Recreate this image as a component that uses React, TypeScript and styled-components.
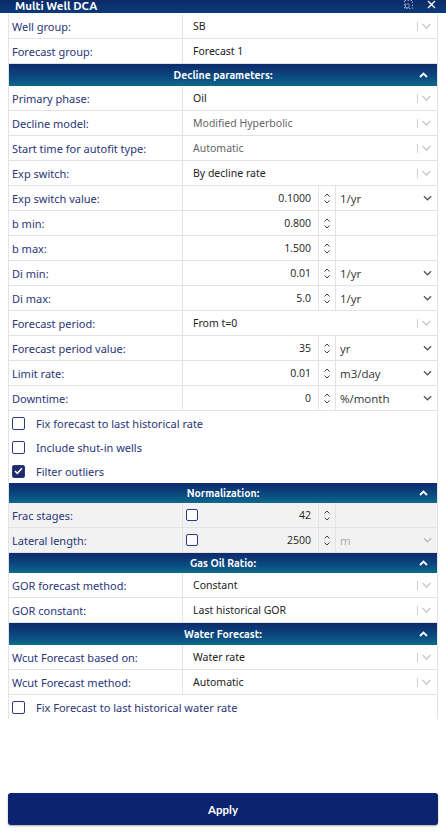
import React from 'react';
import styled, { createGlobalStyle, css } from 'styled-components';

const GlobalStyle = createGlobalStyle`
  html, body {
    margin: 0;
    padding: 0;
    background: #ffffff;
  }
  body {
    font-family: "Noto Sans", "Open Sans", sans-serif;
    width: 446px;
    height: 832px;
    overflow: hidden;
  }
`;

const LABEL = '#2a3577';
const BORDER = '#e3e3e3';

const Page = styled.div`
  width: 446px;
  height: 832px;
  display: flex;
  flex-direction: column;
`;

const TitleBar = styled.div`
  height: 13px;
  flex: 0 0 13px;
  background: linear-gradient(#0b2a6a, #0b3b78);
  display: flex;
  align-items: center;
  padding: 0 10px 0 15px;
  color: #fff;
`;

const Title = styled.div`
  font-family: "Ubuntu", "Noto Sans", sans-serif;
  font-weight: 700;
  font-size: 11.5px;
  line-height: 13px;
  margin-top: -3px;
  flex: 1;
`;

const TitleIcons = styled.div`
  display: flex;
  gap: 14px;
  align-items: center;
  margin-top: -4px;
`;

const Panel = styled.div`
  margin: 1px 8px 0 8px;
  border-left: 1px solid ${BORDER};
  border-right: 1px solid ${BORDER};
  display: flex;
  flex-direction: column;
`;

const Row = styled.div<{ $shaded?: boolean }>`
  height: 25px;
  display: grid;
  grid-template-columns: 174px 1fr;
  border-bottom: 1px solid ${BORDER};
  box-sizing: border-box;
  background: ${(p) => (p.$shaded ? '#f2f2f2' : '#fff')};
`;

const Label = styled.div`
  display: flex;
  align-items: center;
  padding-left: 3px;
  font-size: 11px;
  color: ${LABEL};
  border-right: 1px solid ${BORDER};
  white-space: nowrap;
`;

const SelectCell = styled.div<{ $muted?: boolean }>`
  display: flex;
  align-items: center;
  padding-left: 10px;
  font-size: 10.5px;
  color: ${(p) => (p.$muted ? '#666' : '#222')};
`;

const SelectText = styled.div`
  flex: 1;
`;

const DisabledArrow = styled.div`
  display: flex;
  align-items: center;
  gap: 3px;
  padding-right: 5px;
  color: #c9c9c9;
`;

const Bar = styled.div`
  width: 1px;
  height: 9px;
  background: #d0d0d0;
`;

const NumberCells = styled.div`
  display: grid;
  grid-template-columns: 136px 17px 1fr;
`;

const NumberInput = styled.div<{ $withCheck?: boolean }>`
  display: flex;
  align-items: center;
  justify-content: ${(p) => (p.$withCheck ? 'space-between' : 'flex-end')};
  padding: 0 7px 0 3px;
  font-family: "Open Sans", "Noto Sans", sans-serif;
  font-size: 10.5px;
  color: #222;
  border-right: 1px solid ${BORDER};
`;

const Spinner = styled.div`
  display: flex;
  flex-direction: column;
  align-items: center;
  justify-content: center;
  gap: 3px;
  border-right: 1px solid ${BORDER};
`;

const UnitCell = styled.div<{ $muted?: boolean }>`
  display: flex;
  align-items: center;
  padding: 0 5px 0 4px;
  font-family: "Open Sans", "Noto Sans", sans-serif;
  font-size: 11.5px;
  color: ${(p) => (p.$muted ? '#aaa' : '#333')};
`;

const UnitText = styled.div`
  flex: 1;
`;

const CheckRow = styled.div`
  height: 24px;
  display: flex;
  align-items: center;
  gap: 11px;
  padding-left: 3px;
  font-size: 11px;
  color: ${LABEL};
`;

const boxBase = css`
  width: 13px;
  height: 13px;
  box-sizing: border-box;
  border: 1.5px solid #2b3a7e;
  border-radius: 2px;
  flex: 0 0 auto;
  display: flex;
  align-items: center;
  justify-content: center;
`;

const Box = styled.div<{ $checked?: boolean; $small?: boolean }>`
  ${boxBase};
  width: ${(p) => (p.$small ? 12 : 13)}px;
  height: ${(p) => (p.$small ? 12 : 13)}px;
  background: ${(p) => (p.$checked ? '#1e2c6e' : '#fff')};
`;

const SectionHeader = styled.div<{ $tall?: boolean }>`
  height: ${(p) => (p.$tall ? 22 : 20)}px;
  flex: 0 0 auto;
  background: linear-gradient(#0c2a6c 0%, #0b4a80 60%, #0b6a8c 100%);
  display: flex;
  align-items: center;
  justify-content: center;
  position: relative;
  color: #fff;
  font-family: "Ubuntu", "Noto Sans", sans-serif;
  font-weight: 700;
  font-size: 10.5px;
`;

const HeaderCaret = styled.div`
  position: absolute;
  right: 9px;
  top: 50%;
  transform: translateY(-50%);
  display: flex;
`;

const Spacer = styled.div`
  flex: 1;
`;

const ApplyButton = styled.button`
  margin: 0 8px 7px 8px;
  height: 32px;
  border: none;
  border-radius: 3px;
  background: #0c2370;
  color: #fff;
  font-family: "Lato", sans-serif;
  font-weight: 700;
  font-size: 11.5px;
  box-shadow: 0 1px 2px rgba(0, 0, 0, 0.35);
`;

const ChevronDown = ({ color = '#555', w = 10 }: { color?: string; w?: number }) => (
  <svg width={w} height={6} viewBox="0 0 10 6">
    <path d="M1 1l4 4 4-4" fill="none" stroke={color} strokeWidth="1.4" />
  </svg>
);

const CaretUp = () => (
  <svg width={9} height={6} viewBox="0 0 9 6">
    <path d="M1 5l3.5-3.5L8 5" fill="none" stroke="#fff" strokeWidth="1.8" />
  </svg>
);

const SmallUp = () => (
  <svg width={6} height={4} viewBox="0 0 6 4">
    <path d="M0.5 3.5L3 1l2.5 2.5" fill="none" stroke="#444" strokeWidth="1" />
  </svg>
);

const SmallDown = () => (
  <svg width={6} height={4} viewBox="0 0 6 4">
    <path d="M0.5 0.5L3 3l2.5-2.5" fill="none" stroke="#444" strokeWidth="1" />
  </svg>
);

const CheckMark = () => (
  <svg width={9} height={8} viewBox="0 0 9 8">
    <path d="M1 4l2.3 2.3L8 1.2" fill="none" stroke="#fff" strokeWidth="1.5" />
  </svg>
);

interface SelectRowProps {
  label: string;
  value: string;
  muted?: boolean;
}

const SelectRow = ({ label, value, muted }: SelectRowProps) => (
  <Row>
    <Label>{label}</Label>
    <SelectCell $muted={muted}>
      <SelectText>{value}</SelectText>
      <DisabledArrow>
        <Bar />
        <ChevronDown color="#c9c9c9" w={11} />
      </DisabledArrow>
    </SelectCell>
  </Row>
);

const PlainRow = ({ label, value }: { label: string; value: string }) => (
  <Row>
    <Label>{label}</Label>
    <SelectCell>
      <SelectText>{value}</SelectText>
    </SelectCell>
  </Row>
);

interface NumberRowProps {
  label: string;
  value: string;
  unit?: string;
  unitMuted?: boolean;
  check?: boolean;
  shaded?: boolean;
}

const NumberRow = ({ label, value, unit, unitMuted, check, shaded }: NumberRowProps) => (
  <Row $shaded={shaded}>
    <Label>{label}</Label>
    <NumberCells>
      <NumberInput $withCheck={check}>
        {check && <Box $small />}
        <span>{value}</span>
      </NumberInput>
      <Spinner>
        <SmallUp />
        <SmallDown />
      </Spinner>
      <UnitCell $muted={unitMuted}>
        {unit && (
          <>
            <UnitText>{unit}</UnitText>
            <ChevronDown color={unitMuted ? '#bbb' : '#555'} w={9} />
          </>
        )}
      </UnitCell>
    </NumberCells>
  </Row>
);

const Check = ({ label, checked }: { label: string; checked?: boolean }) => (
  <CheckRow>
    <Box $checked={checked}>{checked && <CheckMark />}</Box>
    <span>{label}</span>
  </CheckRow>
);

const Header = ({ title, tall }: { title: string; tall?: boolean }) => (
  <SectionHeader $tall={tall}>
    {title}
    <HeaderCaret>
      <CaretUp />
    </HeaderCaret>
  </SectionHeader>
);

export default function App() {
  return (
    <Page>
      <GlobalStyle />
      <TitleBar>
        <Title>Multi Well DCA</Title>
        <TitleIcons>
          <svg width={9} height={9} viewBox="0 0 9 9">
            <rect x="0.5" y="0.5" width="8" height="8" fill="none" stroke="#8fa0c8" strokeDasharray="1.5 1.5" />
            <rect x="1.5" y="4" width="3.5" height="3.5" fill="none" stroke="#8fa0c8" strokeWidth="0.8" />
          </svg>
          <svg width={9} height={9} viewBox="0 0 9 9">
            <path d="M1 1l7 7M8 1L1 8" stroke="#fff" strokeWidth="1.3" />
          </svg>
        </TitleIcons>
      </TitleBar>
      <Panel>
        <SelectRow label="Well group:" value="SB" />
        <PlainRow label="Forecast group:" value="Forecast 1" />
        <Header title="Decline parameters:" tall />
        <SelectRow label="Primary phase:" value="Oil" />
        <SelectRow label="Decline model:" value="Modified Hyperbolic" muted />
        <SelectRow label="Start time for autofit type:" value="Automatic" muted />
        <SelectRow label="Exp switch:" value="By decline rate" />
        <NumberRow label="Exp switch value:" value="0.1000" unit="1/yr" />
        <NumberRow label="b min:" value="0.800" />
        <NumberRow label="b max:" value="1.500" />
        <NumberRow label="Di min:" value="0.01" unit="1/yr" />
        <NumberRow label="Di max:" value="5.0" unit="1/yr" />
        <SelectRow label="Forecast period:" value="From t=0" />
        <NumberRow label="Forecast period value:" value="35" unit="yr" />
        <NumberRow label="Limit rate:" value="0.01" unit="m3/day" />
        <NumberRow label="Downtime:" value="0" unit="%/month" />
        <Check label="Fix forecast to last historical rate" />
        <Check label="Include shut-in wells" />
        <Check label="Filter outliers" checked />
        <Header title="Normalization:" />
        <NumberRow label="Frac stages:" value="42" check shaded />
        <NumberRow label="Lateral length:" value="2500" unit="m" unitMuted check shaded />
        <Header title="Gas Oil Ratio:" />
        <SelectRow label="GOR forecast method:" value="Constant" />
        <SelectRow label="GOR constant:" value="Last historical GOR" />
        <Header title="Water Forecast:" tall />
        <SelectRow label="Wcut Forecast based on:" value="Water rate" />
        <SelectRow label="Wcut Forecast method:" value="Automatic" />
        <Check label="Fix Forecast to last historical water rate" />
      </Panel>
      <Spacer />
      <ApplyButton>Apply</ApplyButton>
    </Page>
  );
}
